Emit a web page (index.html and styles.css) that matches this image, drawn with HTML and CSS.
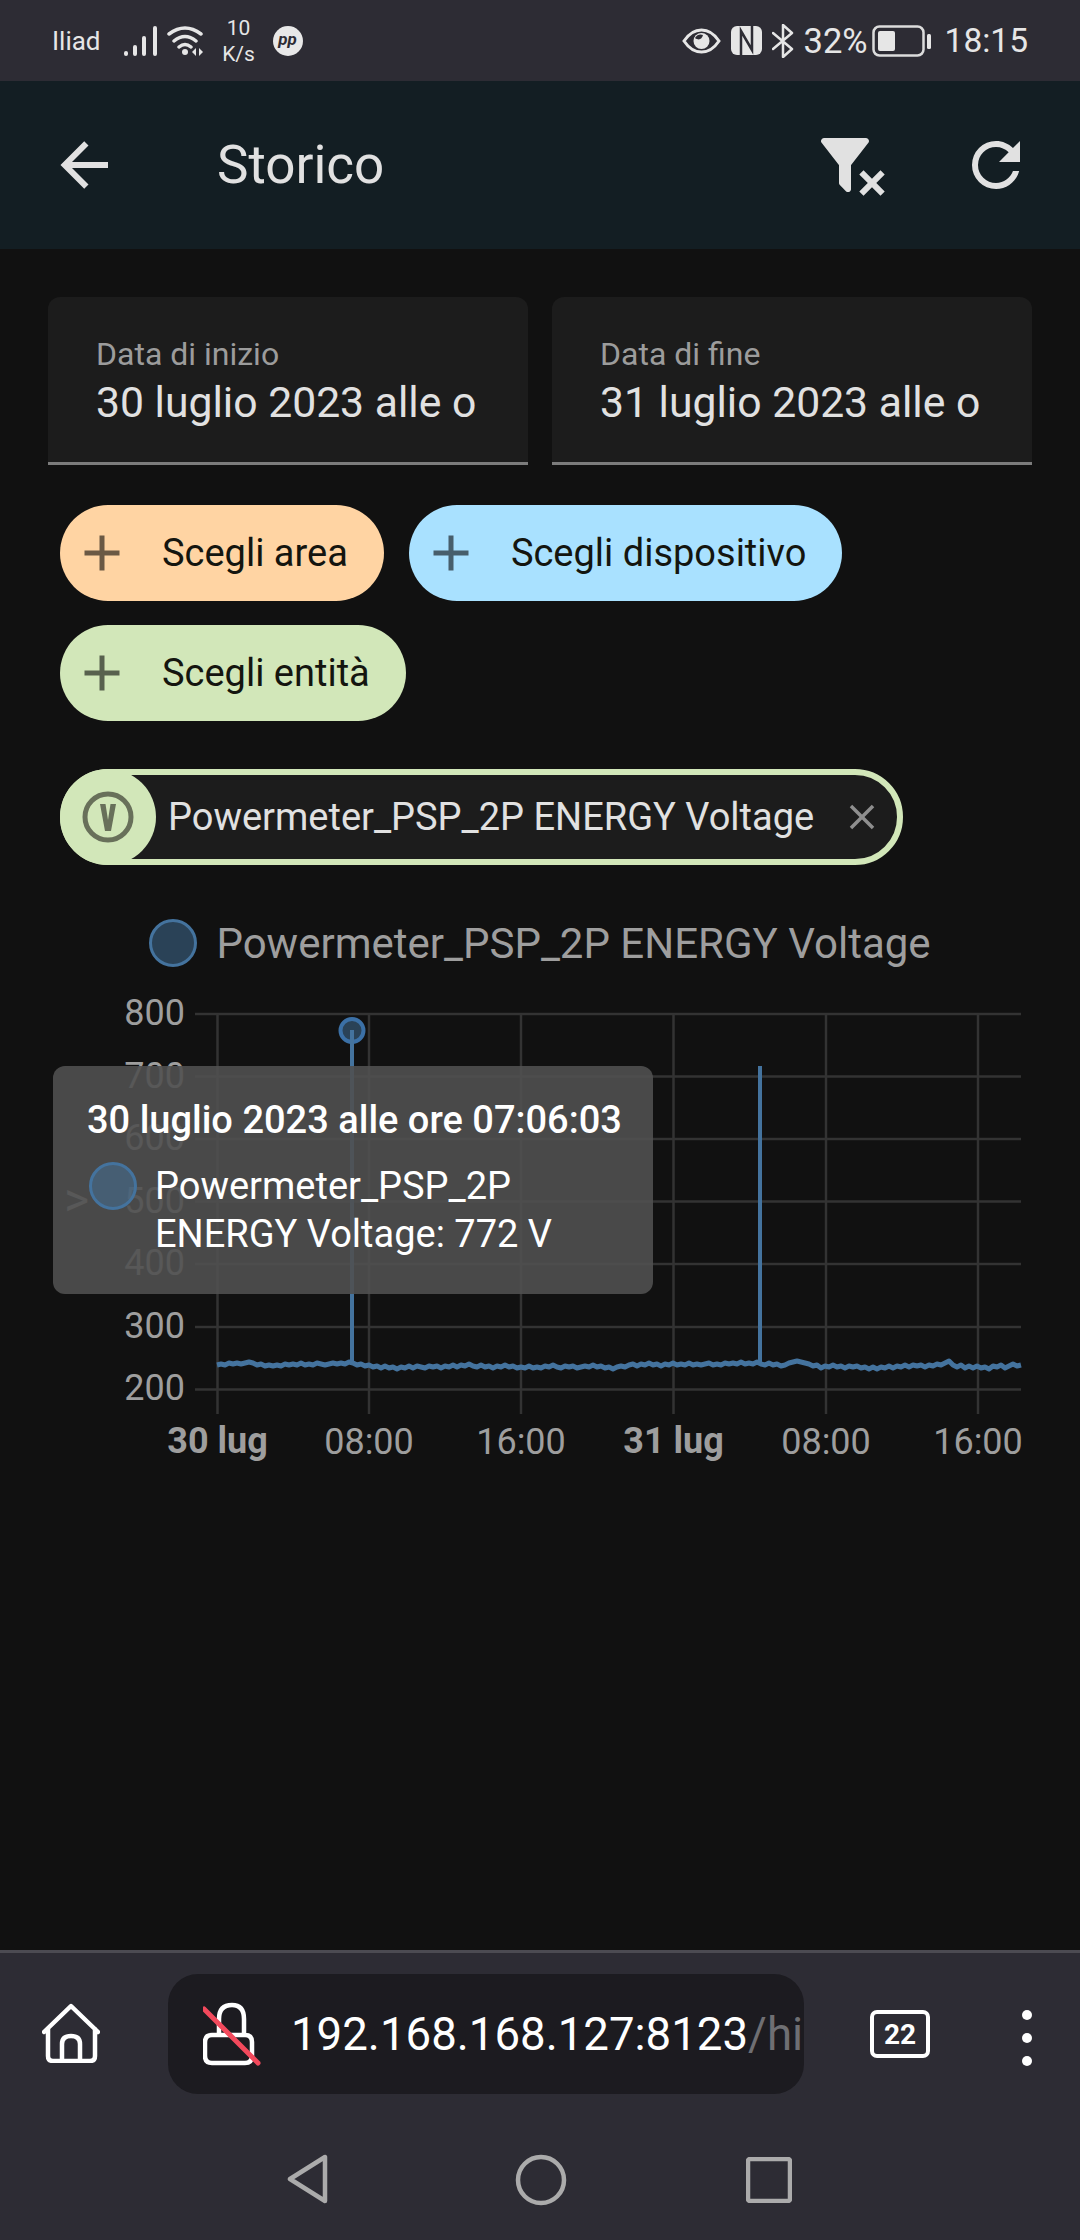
FILE: index.html
```html
<!DOCTYPE html>
<html lang="it">
<head>
  <meta charset="UTF-8" />
  <meta name="viewport" content="width=device-width, initial-scale=1.0" />
  <title>Storico</title>
  <link rel="stylesheet" href="styles.css">
</head>
<body>

  <div class="status-bar">
    <div class="status-left">
      <span class="carrier">Iliad</span>
      <svg class="signal" width="34" height="30" viewBox="0 0 34 30">
        <rect x="0" y="25" width="4" height="5" rx="2" />
        <rect x="9" y="19" width="4" height="11" rx="2" />
        <rect x="18" y="10" width="4" height="20" rx="2" />
        <rect x="29" y="0" width="4" height="30" rx="2" />
      </svg>
      <svg class="wifi" width="38" height="32" viewBox="0 0 38 32">
        <path d="M2 9 Q18 -3 34 9 M7 16 Q18 7 29 16 M12 22 Q18 17 24 22" />
        <circle cx="18" cy="27" r="3" />
        <path class="wifi-arrows" d="M29 23 L25 27 L29 31 Z M32 23 L36 27 L32 31 Z" />
      </svg>
      <div class="speed">
        <span>10</span>
        <span>K/s</span>
      </div>
      <div class="pp-badge">pp</div>
    </div>
    <div class="status-right">
      <svg class="eye" width="39" height="26" viewBox="0 0 39 26">
        <path class="eye-outline" d="M2 13 C8 4 14 2 19.5 2 S31 4 37 13 C31 22 25 24 19.5 24 S8 22 2 13 Z" />
        <circle cx="19.5" cy="13" r="8" />
        <path class="eye-glint" d="M13 10 C15 6 19 6 21 7 C20 11 17 13 13 10 Z" />
      </svg>
      <svg class="nfc" width="31" height="29" viewBox="0 0 31 29">
        <rect width="31" height="29" rx="6" />
        <path d="M10 29 V5 L21 24 V0" />
      </svg>
      <svg class="bluetooth" width="22" height="34" viewBox="0 0 22 34">
        <path d="M1 9 L20 25 L11 33 V1 L20 9 L1 25" />
      </svg>
      <span class="battery-text">32%</span>
      <svg class="battery" width="59" height="32" viewBox="0 0 59 32">
        <rect class="battery-shell" x="1.5" y="1.5" width="50" height="29" rx="6" />
        <rect x="6" y="6" width="17" height="20" rx="2" />
        <rect x="55" y="9" width="4" height="15" rx="1.5" />
      </svg>
      <span class="clock">18:15</span>
    </div>
  </div>

  <header class="app-bar">
    <svg class="app-icon back" viewBox="0 0 24 24"><path d="M20,11V13H8L13.5,18.5L12.08,19.92L4.16,12L12.08,4.08L13.5,5.5L8,11H20Z" /></svg>
    <h1 class="title">Storico</h1>
    <svg class="app-icon filter" viewBox="0 0 24 24"><path d="M14.76,20.83L17.6,18L14.76,15.17L16.17,13.76L19,16.57L21.83,13.76L23.24,15.17L20.43,18L23.24,20.83L21.83,22.24L19,19.4L16.17,22.24L14.76,20.83M12,12V19.88C12.04,20.18 11.94,20.5 11.71,20.71C11.32,21.1 10.69,21.1 10.3,20.71L8.29,18.7C8.06,18.47 7.96,18.16 8,17.88V12H7.97L2.21,4.62C1.87,4.19 1.95,3.56 2.38,3.22C2.57,3.08 2.78,3 3,3V3H17V3C17.22,3 17.43,3.08 17.62,3.22C18.05,3.56 18.13,4.19 17.79,4.62L12.03,12H12Z" /></svg>
    <svg class="app-icon refresh" viewBox="0 0 24 24"><path d="M17.65,6.35C16.2,4.9 14.21,4 12,4A8,8 0 0,0 4,12A8,8 0 0,0 12,20C15.73,20 18.84,17.45 19.73,14H17.65C16.83,16.33 14.61,18 12,18A6,6 0 0,1 6,12A6,6 0 0,1 12,6C13.66,6 15.14,6.69 16.22,7.78L13,11H20V4L17.65,6.35Z" /></svg>
  </header>

  <main class="content">
    <div class="date-row">
      <div class="date-field">
        <span class="date-label">Data di inizio</span>
        <span class="date-value">30 luglio 2023 alle o</span>
      </div>
      <div class="date-field">
        <span class="date-label">Data di fine</span>
        <span class="date-value">31 luglio 2023 alle o</span>
      </div>
    </div>

    <div class="chip-row">
      <div class="chip chip-area">
        <svg class="chip-plus" viewBox="0 0 24 24"><path d="M19,13H13V19H11V13H5V11H11V5H13V11H19V13Z" /></svg>
        <span>Scegli area</span>
      </div>
      <div class="chip chip-device">
        <svg class="chip-plus" viewBox="0 0 24 24"><path d="M19,13H13V19H11V13H5V11H11V5H13V11H19V13Z" /></svg>
        <span>Scegli dispositivo</span>
      </div>
      <div class="chip chip-entity">
        <svg class="chip-plus" viewBox="0 0 24 24"><path d="M19,13H13V19H11V13H5V11H11V5H13V11H19V13Z" /></svg>
        <span>Scegli entità</span>
      </div>
    </div>

    <div class="selected-chip">
      <div class="selected-icon">
        <svg width="52" height="52" viewBox="0 0 52 52">
          <circle class="v-ring" cx="26" cy="26" r="23" />
          <path class="v-mark" d="M18 13 H23.5 L26 29 L28.5 13 H34 L29 40 H23 Z" />
        </svg>
      </div>
      <span class="selected-text">Powermeter_PSP_2P ENERGY Voltage</span>
      <svg class="selected-close" viewBox="0 0 24 24"><path d="M19,6.41L17.59,5L12,10.59L6.41,5L5,6.41L10.59,12L5,17.59L6.41,19L12,13.41L17.59,19L19,17.59L13.41,12L19,6.41Z" /></svg>
    </div>

    <div class="legend">
      <span class="swatch"></span>
      <span class="legend-text">Powermeter_PSP_2P ENERGY Voltage</span>
    </div>

    <div class="chart">
      <svg class="chart-svg" width="1080" height="490" viewBox="0 990 1080 490">
        <g class="grid">
          <path d="M195 1014H1021M195 1076.5H1021M195 1139H1021M195 1201.5H1021M195 1264H1021M195 1327H1021M195 1389.5H1021" />
          <path d="M217.5 1014V1414M369 1014V1414M521 1014V1414M673.5 1014V1414M826 1014V1414M978 1014V1414" />
        </g>
        <g class="y-labels">
          <text x="185" y="1025">800</text>
          <text x="185" y="1088">700</text>
          <text x="185" y="1150">600</text>
          <text x="185" y="1213">500</text>
          <text x="185" y="1275">400</text>
          <text x="185" y="1338">300</text>
          <text x="185" y="1400">200</text>
        </g>
        <g class="x-labels">
          <text class="day" x="217.5" y="1453">30 lug</text>
          <text x="369" y="1454">08:00</text>
          <text x="521" y="1454">16:00</text>
          <text class="day" x="673.5" y="1453">31 lug</text>
          <text x="826" y="1454">08:00</text>
          <text x="978" y="1454">16:00</text>
        </g>
        <path class="spike" d="M352 1030V1364M760 1066V1364" />
        <polyline class="voltage" points="217,1365 221,1364 225,1365 229,1363 233,1364 237,1363 241,1364 245,1363 249,1362 253,1363 257,1365 261,1364 265,1366 269,1365 273,1366 277,1365 281,1366 285,1364 289,1365 293,1364 297,1365 301,1363 305,1365 309,1364 313,1365 317,1363 321,1364 325,1365 329,1364 333,1363 337,1364 341,1363 345,1364 349,1362 353,1363 357,1365 361,1364 365,1366 369,1365 373,1367 377,1366 381,1368 385,1366 389,1368 393,1367 397,1369 401,1367 405,1368 409,1366 413,1368 417,1366 421,1367 425,1368 429,1366 433,1367 437,1366 441,1368 445,1366 449,1367 453,1365 457,1367 461,1365 465,1366 469,1364 473,1366 477,1367 481,1365 485,1367 489,1366 493,1368 497,1366 501,1367 505,1365 509,1367 513,1366 517,1368 521,1367 525,1368 529,1366 533,1368 537,1367 541,1368 545,1366 549,1367 553,1365 557,1367 561,1368 565,1366 569,1367 573,1366 577,1368 581,1367 585,1366 589,1367 593,1365 597,1367 601,1366 605,1368 609,1367 613,1369 617,1367 621,1366 625,1367 629,1365 633,1364 637,1366 641,1364 645,1365 649,1363 653,1365 657,1364 661,1366 665,1364 669,1365 673,1363 677,1365 681,1364 685,1365 689,1363 693,1365 697,1364 701,1365 705,1364 709,1363 713,1365 717,1364 721,1365 725,1363 729,1364 733,1363 737,1364 741,1362 745,1364 749,1363 753,1364 757,1362 761,1364 765,1365 769,1363 773,1365 777,1364 781,1366 785,1365 789,1363 793,1362 797,1361 801,1362 805,1363 809,1364 813,1366 817,1365 821,1368 825,1366 829,1367 833,1365 837,1367 841,1366 845,1368 849,1366 853,1367 857,1366 861,1368 865,1367 869,1369 873,1367 877,1369 881,1367 885,1368 889,1366 893,1368 897,1366 901,1367 905,1365 909,1367 913,1365 917,1366 921,1365 925,1367 929,1365 933,1366 937,1364 941,1365 945,1363 949,1361 953,1365 957,1367 961,1365 965,1368 969,1366 973,1368 977,1366 981,1368 985,1367 989,1369 993,1366 997,1367 1001,1365 1005,1368 1009,1366 1013,1364 1017,1366 1021,1365" />
        <circle class="marker" cx="352" cy="1030.5" r="11.5" />
        <path class="marker-line" d="M352 1030V1060" />
        <text class="stray" x="64" y="1216">&gt;</text>
      </svg>

      <div class="tooltip">
        <div class="tooltip-title">30 luglio 2023 alle ore 07:06:03</div>
        <div class="tooltip-row">
          <span class="tooltip-swatch"></span>
          <span class="tooltip-text">Powermeter_PSP_2P<br>ENERGY Voltage: 772 V</span>
        </div>
      </div>
    </div>
  </main>

  <footer class="browser">
    <div class="toolbar">
      <svg class="home" width="58" height="60" viewBox="0 0 58 60">
        <path d="M2 29 L29 3 L56 29 M6 26 V53 Q6 58 11 58 H48 Q53 58 53 53 V26 M20 58 V41 Q20 33 29 33 Q38 33 38 41 V58" />
      </svg>
      <div class="url-bar">
        <svg class="lock" width="58" height="64" viewBox="0 0 58 64">
          <path class="lock-body" d="M16 33 V17 Q16 3 29 3 Q41 3 41 17 V33 M9 33 H42 Q49 33 49 40 V54 Q49 61 42 61 H9 Q2 61 2 54 V40 Q2 33 9 33 Z" />
          <path class="lock-slash" d="M1 7 L55 61" />
        </svg>
        <div class="url-clip">192.168.168.127:8123<span class="url-rest">/hi</span></div>
      </div>
      <div class="tabs">22</div>
      <div class="menu-dots">
        <span></span>
        <span></span>
        <span></span>
      </div>
    </div>
    <nav class="nav-bar">
      <svg width="42" height="50" viewBox="0 0 42 50"><path d="M38 3 V47 L3 25 Z" /></svg>
      <svg width="52" height="52" viewBox="0 0 52 52"><circle cx="26" cy="26" r="23" /></svg>
      <svg class="nav-square" width="46" height="46" viewBox="0 0 46 46"><rect x="2" y="2" width="42" height="42" rx="2" /></svg>
    </nav>
  </footer>

</body>
</html>
```

FILE: styles.css
```css
* {
  box-sizing: border-box;
}

body {
  margin: 0;
  width: 1080px;
  height: 2240px;
  overflow: hidden;
  display: flex;
  flex-direction: column;
  font-family: Roboto, "Noto Sans", sans-serif;
  background-color: #111;
  color: #e1e1e1;
}

/* status bar */
.status-bar {
  height: 81px;
  flex: none;
  display: flex;
  justify-content: space-between;
  align-items: center;
  padding: 0 52px;
  background-color: #2d2c34;
  color: #e6e6e6;
}

.status-left,
.status-right {
  display: flex;
  align-items: center;
}

.carrier {
  font-size: 26px;
}

.signal {
  margin-left: 23px;
  fill: #e6e6e6;
}

.wifi {
  margin-left: 9px;
  fill: #e6e6e6;
}

.wifi path {
  fill: none;
  stroke: #e6e6e6;
  stroke-width: 3.5;
  stroke-linecap: round;
}

.wifi .wifi-arrows {
  fill: #e6e6e6;
  stroke: none;
}

.speed {
  margin-left: 16px;
  display: flex;
  flex-direction: column;
  align-items: center;
  font-size: 21px;
  line-height: 26px;
  width: 36px;
}

.pp-badge {
  margin-left: 16px;
  width: 30px;
  height: 30px;
  border-radius: 50%;
  background-color: #e8e8e8;
  color: #2d2c34;
  font-size: 17px;
  font-weight: 700;
  font-style: italic;
  line-height: 26px;
  text-align: center;
}

.eye-outline {
  fill: none;
  stroke: #e6e6e6;
  stroke-width: 3;
}

.eye {
  fill: #e6e6e6;
}

.eye .eye-glint {
  fill: #2d2c34;
}

.nfc {
  margin-left: 10px;
  fill: #e6e6e6;
}

.nfc path {
  fill: none;
  stroke: #2d2c34;
  stroke-width: 2.5;
}

.bluetooth {
  margin-left: 10px;
}

.bluetooth path {
  fill: none;
  stroke: #e6e6e6;
  stroke-width: 2.5;
  stroke-linecap: round;
  stroke-linejoin: round;
}

.battery-text {
  margin-left: 10px;
  font-size: 34.5px;
}

.battery {
  margin-left: 4px;
  fill: #e6e6e6;
}

.battery .battery-shell {
  fill: none;
  stroke: #dcdcdc;
  stroke-width: 2.5;
}

.clock {
  margin-left: 14px;
  font-size: 33.5px;
}

/* app bar */
.app-bar {
  height: 168px;
  flex: none;
  display: flex;
  align-items: center;
  padding: 0 48px;
  background-color: #131e23;
}

.app-icon {
  width: 72px;
  height: 72px;
  flex: none;
  fill: #e1e1e1;
}

.title {
  margin: 0 0 0 97px;
  font-size: 53px;
  font-weight: 400;
  flex: 1;
}

.refresh {
  margin-left: 73px;
}

/* filters */
.content {
  flex: 1;
  display: flex;
  flex-direction: column;
  padding-top: 48px;
}

.date-row {
  display: grid;
  grid-template-columns: 480px 480px;
  gap: 24px;
  padding: 0 48px;
}

.date-field {
  height: 168px;
  display: flex;
  flex-direction: column;
  padding: 39px 0 0 48px;
  background-color: #1c1c1c;
  border-radius: 12px 12px 0 0;
  border-bottom: 3px solid #7c7c7c;
}

.date-label {
  font-size: 32px;
  line-height: 36px;
  color: #9c9c9c;
}

.date-value {
  margin-top: 4px;
  font-size: 42.7px;
  line-height: 52px;
  color: #e1e1e1;
}

.chip-row {
  display: flex;
  flex-wrap: wrap;
  gap: 24px 25px;
  padding: 40px 0 0 60px;
  width: 900px;
}

.chip {
  height: 96px;
  display: flex;
  align-items: center;
  padding: 0 36px 0 12px;
  border-radius: 48px;
  color: #14150f;
  font-size: 38px;
}

.chip-plus {
  width: 60px;
  height: 60px;
  margin-right: 30px;
  fill: rgba(0, 0, 0, 0.58);
}

.chip-area {
  background-color: #ffd4a3;
}

.chip-device {
  background-color: #a9e1ff;
}

.chip-entity {
  background-color: #d2e7b9;
}

.selected-chip {
  margin: 48px 0 0 60px;
  width: 843px;
  height: 96px;
  display: flex;
  align-items: center;
  background-color: #1c1c1c;
  border: 6px solid #d2e7b9;
  border-radius: 48px;
}

.selected-icon {
  width: 96px;
  height: 96px;
  margin-left: -6px;
  flex: none;
  display: flex;
  align-items: center;
  justify-content: center;
  background-color: #d2e7b9;
  border-radius: 50%;
}

.v-ring {
  fill: none;
  stroke: #68705a;
  stroke-width: 5;
}

.v-mark {
  fill: #68705a;
}

.selected-text {
  margin-left: 12px;
  font-size: 38px;
  white-space: nowrap;
  color: #e1e1e1;
}

.selected-close {
  margin-left: 27px;
  width: 42px;
  height: 42px;
  fill: #8e8e8e;
}

/* chart */
.legend {
  margin-top: 54px;
  height: 48px;
  display: flex;
  align-items: center;
  justify-content: center;
  gap: 19px;
}

.swatch {
  width: 48px;
  height: 48px;
  border-radius: 50%;
  border: 3.5px solid #44739e;
  background-color: rgba(68, 115, 158, 0.5);
}

.legend-text {
  font-size: 42px;
  color: #9e9e9e;
}

.chart {
  position: relative;
  margin-top: 23px;
  height: 470px;
}

.chart-svg {
  display: block;
}

.grid path {
  fill: none;
  stroke: #333;
  stroke-width: 2.5;
}

.y-labels text,
.x-labels text {
  font-size: 36px;
  fill: #9e9e9e;
}

.y-labels text {
  text-anchor: end;
}

.x-labels text {
  text-anchor: middle;
}

.x-labels .day {
  font-weight: 700;
}

.spike,
.marker-line {
  fill: none;
  stroke: #44739e;
  stroke-width: 4;
}

.voltage {
  fill: none;
  stroke: #44739e;
  stroke-width: 5;
  stroke-linejoin: round;
}

.marker {
  fill: rgba(68, 115, 158, 0.5);
  stroke: #3b70a6;
  stroke-width: 4;
}

.stray {
  font-size: 48px;
  fill: #9e9e9e;
}

.tooltip {
  position: absolute;
  left: 53px;
  top: 76px;
  width: 600px;
  height: 228px;
  padding: 32px 34px;
  border-radius: 12px;
  background-color: rgba(80, 80, 80, 0.9);
  color: #fff;
}

.tooltip-title {
  font-size: 38px;
  font-weight: 500;
  line-height: 44px;
  white-space: nowrap;
}

.tooltip-row {
  display: flex;
  margin-top: 20px;
}

.tooltip-swatch {
  width: 48px;
  height: 48px;
  margin-left: 2px;
  flex: none;
  border-radius: 50%;
  border: 3.5px solid #44739e;
  background-color: rgba(68, 115, 158, 0.5);
}

.tooltip-text {
  margin-left: 18px;
  font-size: 38px;
  line-height: 48px;
  white-space: nowrap;
}

/* browser chrome */
.browser {
  flex: none;
  height: 290px;
  display: flex;
  flex-direction: column;
  background-color: #2d2c34;
  border-top: 3px solid #4c4b52;
}

.toolbar {
  height: 162px;
  flex: none;
  display: flex;
  align-items: flex-start;
  padding: 21px 0 0 42px;
}

.home {
  margin-top: 29px;
}

.home path {
  fill: none;
  stroke: #fff;
  stroke-width: 4.5;
  stroke-linecap: round;
  stroke-linejoin: round;
}

.url-bar {
  margin-left: 68px;
  width: 636px;
  height: 120px;
  flex: none;
  display: flex;
  align-items: center;
  padding-left: 35px;
  background-color: #1c1b20;
  border-radius: 30px;
}

.lock-body,
.lock-slash {
  fill: none;
  stroke-linecap: round;
}

.lock-body {
  stroke: #fff;
  stroke-width: 4.5;
}

.lock-slash {
  stroke: #f2495c;
  stroke-width: 5;
}

.url-clip {
  margin-left: 30px;
  width: 510px;
  overflow: hidden;
  white-space: nowrap;
  font-size: 45.6px;
  color: #fff;
}

.url-rest {
  color: #6f6f73;
}

.tabs {
  margin: 36px 0 0 66px;
  width: 60px;
  height: 48px;
  display: flex;
  align-items: center;
  justify-content: center;
  border: 4px solid #fff;
  border-radius: 7px;
  font-size: 28px;
  font-weight: 700;
  color: #fff;
}

.menu-dots {
  margin: 36px 0 0 92px;
  display: flex;
  flex-direction: column;
  gap: 13px;
}

.menu-dots span {
  width: 10px;
  height: 10px;
  border-radius: 50%;
  background-color: #fff;
}

.nav-bar {
  flex: 1;
  display: flex;
  align-items: flex-start;
  padding: 39px 0 0 287px;
  gap: 186px;
}

.nav-bar svg {
  fill: none;
  stroke: #ababab;
  stroke-width: 4.5;
  stroke-linejoin: round;
}

.nav-square {
  margin: 3px 0 0 -7px;
}
```
